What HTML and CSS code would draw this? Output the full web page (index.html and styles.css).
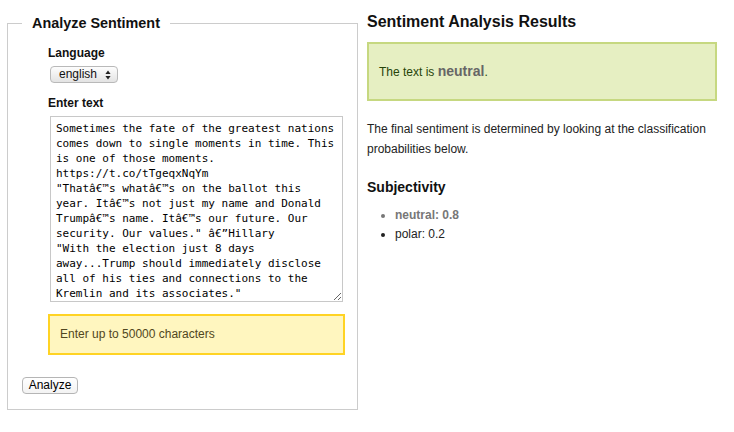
FILE: index.html
```html
<!DOCTYPE html>
<html lang="en">
<head>
<meta charset="utf-8">
<title>Sentiment Analysis</title>
<link rel="stylesheet" href="styles.css">
</head>
<body>
<div class="page">
  <form class="left-col">
    <fieldset class="box">
      <legend class="legend">Analyze Sentiment</legend>
      <div class="form-body">
        <label class="field-label" for="lang">Language</label>
        <span class="select-wrap">
          <select id="lang" class="select"><option>english</option></select>
          <svg class="select-arrows" width="6" height="10" viewBox="0 0 6 10"><path d="M3 0.5 L5.6 4 H0.4 Z M3 9.5 L5.6 6 H0.4 Z" fill="#222"/></svg>
        </span>
        <label class="field-label label-text" for="txt">Enter text</label>
        <textarea id="txt" class="textarea">Sometimes the fate of the greatest nations comes down to single moments in time. This is one of those moments. https://t.co/tTgeqxNqYm
"Thatâ€™s whatâ€™s on the ballot this year. Itâ€™s not just my name and Donald Trumpâ€™s name. Itâ€™s our future. Our security. Our values." â€”Hillary
"With the election just 8 days away...Trump should immediately disclose all of his ties and connections to the Kremlin and its associates."</textarea>
        <div class="notice">Enter up to 50000 characters</div>
      </div>
      <button type="button" class="btn">Analyze</button>
    </fieldset>
  </form>
  <div class="right-col">
    <h3 class="results-title">Sentiment Analysis Results</h3>
    <div class="success">The text is <strong class="verdict">neutral</strong>.</div>
    <p class="explain">The final sentiment is determined by looking at the classification probabilities below.</p>
    <h4 class="sub-title">Subjectivity</h4>
    <ul class="probs">
      <li class="prob prob-top">neutral: 0.8</li>
      <li class="prob">polar: 0.2</li>
    </ul>
  </div>
</div>
</body>
</html>
```

FILE: styles.css
```css
html, body {
  margin: 0;
  padding: 0;
  background: #fff;
}
body {
  font-family: "Liberation Sans", Arial, Helvetica, sans-serif;
  font-size: 12px;
  color: #222;
}
.page {
  display: flex;
  align-items: flex-start;
  gap: 9px;
  padding-left: 7px;
}
.left-col {
  width: 351px;
  margin: 0;
  padding-top: 14px;
}
.box {
  margin: 0;
  border: 1px solid #ccc;
  padding: 0 14px 15px 14px;
  min-width: 0;
}
.legend {
  font-size: 14.4px;
  font-weight: bold;
  line-height: 18px;
  padding: 0 10px;
  color: #111;
}
.form-body {
  padding-left: 26px;
}
.field-label {
  display: block;
  font-weight: bold;
  line-height: 18px;
  margin-top: 12px;
  color: #111;
}
.label-text {
  margin-top: 11px;
}
.select-wrap {
  position: relative;
  display: block;
  width: 68px;
  height: 17px;
  margin: 4px 0 0 2px;
}
.select {
  -webkit-appearance: none;
  appearance: none;
  display: block;
  width: 68px;
  height: 17px;
  margin: 0;
  padding: 0 0 0 8px;
  border: 1px solid #b9b9b9;
  border-radius: 4px;
  background: linear-gradient(#fdfdfd, #e3e3e3);
  font-family: "Liberation Sans", Arial, sans-serif;
  font-size: 12px;
  line-height: 15px;
  color: #111;
}
.select-arrows {
  position: absolute;
  right: 7px;
  top: 4px;
  pointer-events: none;
}
.textarea {
  display: block;
  box-sizing: border-box;
  width: 293px;
  height: 186px;
  margin: 4px 0 0 2px;
  padding: 4px 5px;
  border: 1px solid #c8c8c8;
  font-family: "DejaVu Sans Mono", "Liberation Mono", monospace;
  font-size: 11px;
  line-height: 15px;
  color: #000;
  overflow: hidden;
  resize: both;
}
.notice {
  box-sizing: border-box;
  height: 41px;
  width: 297px;
  margin-top: 12px;
  padding: 0 10px;
  border: 2px solid #ffd324;
  background: #fff6bf;
  color: #514721;
  line-height: 37px;
}
.btn {
  display: block;
  margin-top: 22px;
  width: 56px;
  height: 17px;
  padding: 0;
  border: 1px solid #b5b5b5;
  border-radius: 4px;
  background: linear-gradient(#fff, #f3f3f3);
  font-family: "Liberation Sans", Arial, sans-serif;
  font-size: 12px;
  line-height: 15px;
  color: #000;
}
.right-col {
  width: 350px;
}
.results-title {
  margin: 12px 0 0 0;
  font-size: 16px;
  line-height: 20px;
  font-weight: bold;
  color: #111;
}
.success {
  box-sizing: border-box;
  height: 59px;
  margin-top: 10px;
  padding: 0 10px;
  border: 2px solid #c6d880;
  background: #e6efc2;
  color: #264409;
  line-height: 55px;
}
.verdict {
  font-size: 14px;
  color: #666;
}
.explain {
  margin: 18px 0 0 0;
  line-height: 20px;
}
.sub-title {
  margin: 19px 0 0 0;
  font-size: 14px;
  line-height: 18px;
  font-weight: bold;
  color: #111;
}
.probs {
  margin: 10px 0 0 0;
  padding-left: 28px;
}
.prob {
  line-height: 19px;
}
.prob-top {
  color: #777;
  font-weight: bold;
}
```
